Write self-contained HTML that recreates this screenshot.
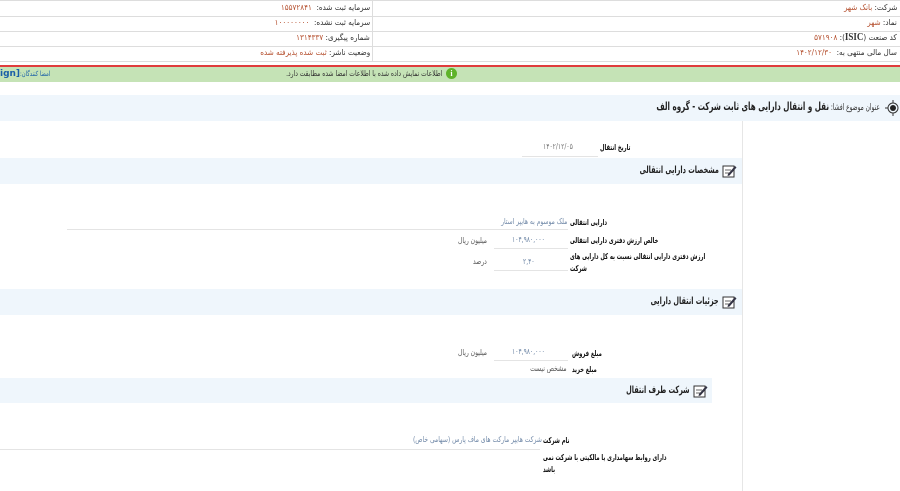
<!DOCTYPE html>
<html><head><meta charset="utf-8"><style>
*{margin:0;padding:0;box-sizing:border-box}
body{width:900px;height:491px;background:#fff;position:relative;overflow:hidden;font-family:"DejaVu Sans","Liberation Sans",sans-serif;font-size:8px;color:#333}
.a{position:absolute;white-space:nowrap;direction:rtl;line-height:12px}
.R{transform-origin:right center}
.L{transform-origin:left center}
.s9{transform:scaleX(0.9)}
.s7{transform:scaleX(0.75)}
.s6{transform:scaleX(0.65)}
.v{color:#b5502f}
.b{font-weight:bold;color:#111}
.bl{color:#7189a8}
.hl{position:absolute;height:1px;background:#e4e4e4}
.band{position:absolute;background:#eff6fc}
.t{font-weight:bold;font-size:10px;color:#222}
.ml{white-space:normal;text-align:left;transform-origin:left top}
</style></head><body>
<!-- top table -->
<div class="hl" style="left:0;top:0;width:900px;background:#ddd"></div>
<div class="hl" style="left:0;top:16px;width:900px;background:#ddd"></div>
<div class="hl" style="left:0;top:31px;width:900px;background:#ddd"></div>
<div class="hl" style="left:0;top:46px;width:900px;background:#ddd"></div>
<div class="hl" style="left:0;top:61px;width:900px;background:#ddd"></div>
<div style="position:absolute;left:372px;top:0;width:1px;height:62px;background:#ddd"></div>

<div class="a R s9" style="right:3px;top:2px">شرکت: <span class="v">بانک شهر</span></div>
<div class="a R s9" style="right:3px;top:17px">نماد: <span class="v">شهر</span></div>
<div class="a R s9" style="right:3px;top:32px">کد صنعت (<b style="font-family:'Liberation Serif';font-size:10px">ISIC</b>): <span class="v">۵۷۱۹۰۸</span></div>
<div class="a R s9" style="right:3px;top:47px">سال مالی منتهی به: <span class="v">&nbsp;۱۴۰۲/۱۲/۳۰</span></div>

<div class="a R s9" style="right:530px;top:2px">سرمایه ثبت شده: <span class="v">&nbsp;۱۵۵۷۲۸۴۱</span></div>
<div class="a R s9" style="right:530px;top:17px">سرمایه ثبت نشده: <span class="v">&nbsp;۱۰۰۰۰۰۰۰۰</span></div>
<div class="a R s9" style="right:530px;top:32px">شماره پیگیری: <span class="v">۱۳۱۴۳۳۷</span></div>
<div class="a R s9" style="right:530px;top:47px">وضعیت ناشر: <span class="v">ثبت شده پذیرفته شده</span></div>

<!-- red/green -->
<div style="position:absolute;left:0;top:65px;width:900px;height:2px;background:#e03c3c"></div>
<div style="position:absolute;left:0;top:67px;width:900px;height:15px;background:#c5e3b6"></div>
<div style="position:absolute;left:446px;top:68px;width:11px;height:11px;border-radius:50%;background:#5fb32a;color:#fff;font-size:8px;font-weight:bold;text-align:center;line-height:11px;font-family:'Liberation Serif'">i</div>
<div class="a R s7" style="right:458px;top:68px;color:#333">اطلاعات نمایش داده شده با اطلاعات امضا شده مطابقت دارد.</div>
<div class="a" style="left:0;top:68px;direction:ltr;color:#1a5fa8;font-weight:bold;font-size:9px">ign]</div>
<div class="a L s7" style="left:20px;top:68px;color:#1a5fa8;font-size:7px">امضا کنندگان:</div>

<!-- title band -->
<div class="band" style="left:0;top:95px;width:900px;height:26px"></div>
<svg style="position:absolute;left:884px;top:100px" width="16" height="16" viewBox="0 0 16 16"><circle cx="9" cy="8" r="5" fill="none" stroke="#333" stroke-width="1"/><circle cx="9" cy="8" r="3" fill="#222"/><path d="M9 0v3M9 13v3M1 8h3" stroke="#333" stroke-width="1"/></svg>
<div class="a R s6" style="right:20px;top:101px;font-size:9px">عنوان موضوع افشا: <span class="t" style="font-size:11px">نقل و انتقال دارایی های ثابت شرکت - گروه الف</span></div>

<div style="position:absolute;left:742px;top:121px;width:1px;height:370px;background:#e6e6e6"></div>

<!-- date -->
<div class="a b L s6" style="left:600px;top:142px">تاریخ انتقال</div>
<div class="a L s7" style="left:543px;top:141px;color:#777">۱۴۰۲/۱۲/۰۵</div>
<div class="hl" style="left:522px;top:156px;width:76px"></div>

<!-- section 1 -->
<div class="band" style="left:0;top:158px;width:742px;height:26px"></div>
<svg style="position:absolute;left:722px;top:164px" width="15" height="14" viewBox="0 0 15 14"><rect x="1" y="2" width="11" height="11" fill="#fff" stroke="#333"/><path d="M3 6h6M3 9h5" stroke="#666"/><path d="M6 10l7-8 1.5 1.5-7 8-2 .5z" fill="#334" /></svg>
<div class="a t R s6" style="right:181px;top:165px">مشخصات دارایی انتقالی</div>

<div class="a b L s6" style="left:570px;top:217px">دارایی انتقالی</div>
<div class="a bl R s7" style="right:333px;top:216px">ملک موسوم به هایپر استار</div>
<div class="hl" style="left:67px;top:229px;width:501px"></div>

<div class="a b L s6" style="left:570px;top:235px">خالص ارزش دفتری دارایی انتقالی</div>
<div class="a bl L s7" style="left:512px;top:234px">۱۰۴,۹۸۰,۰۰۰</div>
<div class="hl" style="left:494px;top:248px;width:74px"></div>
<div class="a L s7" style="left:458px;top:235px;color:#555">میلیون ریال</div>

<div class="a b ml" style="left:570px;top:251px;width:222px;transform:scaleX(0.65)">ارزش دفتری دارایی انتقالی نسبت به کل دارایی های شرکت</div>
<div class="a bl L s7" style="left:523px;top:256px">۲,۴۰</div>
<div class="hl" style="left:494px;top:270px;width:74px"></div>
<div class="a L s7" style="left:473px;top:256px;color:#555">درصد</div>

<!-- section 2 -->
<div class="band" style="left:0;top:289px;width:742px;height:26px"></div>
<svg style="position:absolute;left:722px;top:295px" width="15" height="14" viewBox="0 0 15 14"><rect x="1" y="2" width="11" height="11" fill="#fff" stroke="#333"/><path d="M3 6h6M3 9h5" stroke="#666"/><path d="M6 10l7-8 1.5 1.5-7 8-2 .5z" fill="#334" /></svg>
<div class="a t R s6" style="right:181px;top:296px">جزئیات انتقال دارایی</div>

<div class="a b L s6" style="left:572px;top:348px">مبلغ فروش</div>
<div class="a bl L s7" style="left:512px;top:346px">۱۰۴,۹۸۰,۰۰۰</div>
<div class="hl" style="left:494px;top:360px;width:74px"></div>
<div class="a L s7" style="left:458px;top:347px;color:#555">میلیون ریال</div>
<div class="a b L s6" style="left:572px;top:364px">مبلغ خرید</div>
<div class="a R s7" style="right:333px;top:363px;color:#555">مشخص نیست</div>

<!-- section 3 -->
<div class="band" style="left:0;top:378px;width:712px;height:25px"></div>
<svg style="position:absolute;left:693px;top:384px" width="15" height="14" viewBox="0 0 15 14"><rect x="1" y="2" width="11" height="11" fill="#fff" stroke="#333"/><path d="M3 6h6M3 9h5" stroke="#666"/><path d="M6 10l7-8 1.5 1.5-7 8-2 .5z" fill="#334" /></svg>
<div class="a t R s6" style="right:210px;top:385px">شرکت طرف انتقال</div>

<div class="a b L s6" style="left:543px;top:435px">نام شرکت</div>
<div class="a bl R s7" style="right:358px;top:434px">شرکت هایپر مارکت های ماف پارس (سهامی خاص)</div>
<div class="hl" style="left:0;top:449px;width:540px"></div>
<div class="a b ml" style="left:543px;top:452px;width:210px;transform:scaleX(0.65)">دارای روابط سهامداری یا مالکیتی با شرکت نمی باشد</div>
</body></html>
